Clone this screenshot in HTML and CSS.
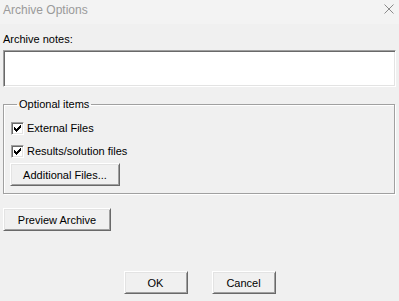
FILE: index.html
```html
<!DOCTYPE html>
<html lang="en">
<head>
  <meta charset="UTF-8" />
  <title>Archive Options</title>
  <link rel="stylesheet" href="styles.css">
</head>
<body>
  <div class="dialog">
    <div class="title-bar">
      <span class="title">Archive Options</span>
      <svg class="close-icon" width="10" height="10" viewBox="0 0 10 10">
        <path d="M0.5 0.5L9.5 9.5M9.5 0.5L0.5 9.5" stroke="#8a8a8a" stroke-width="1" fill="none"/>
      </svg>
    </div>
    <div class="content">
      <label class="notes-label" for="notes">Archive notes:</label>
      <textarea class="notes" id="notes"></textarea>

      <fieldset class="group">
        <legend>Optional items</legend>
        <div class="check-row">
          <span class="check">
            <svg width="9" height="9" viewBox="2 2 9 9" shape-rendering="crispEdges"><path d="M3 5h1v3H3zM4 6h1v3H4zM5 7h1v3H5zM6 6h1v3H6zM7 5h1v3H7zM8 4h1v3H8zM9 3h1v3H9z" fill="#000"/></svg>
          </span>
          <span class="check-label">External Files</span>
        </div>
        <div class="check-row">
          <span class="check">
            <svg width="9" height="9" viewBox="2 2 9 9" shape-rendering="crispEdges"><path d="M3 5h1v3H3zM4 6h1v3H4zM5 7h1v3H5zM6 6h1v3H6zM7 5h1v3H7zM8 4h1v3H8zM9 3h1v3H9z" fill="#000"/></svg>
          </span>
          <span class="check-label">Results/solution files</span>
        </div>
        <button type="button" class="btn additional-btn">Additional Files...</button>
      </fieldset>

      <button type="button" class="btn preview-btn">Preview Archive</button>

      <div class="footer">
        <button type="button" class="btn footer-btn">OK</button>
        <button type="button" class="btn footer-btn">Cancel</button>
      </div>
    </div>
  </div>
</body>
</html>
```

FILE: styles.css
```css
body {
  margin: 0;
  font-family: "Liberation Sans", Arial, sans-serif;
  font-size: 11px;
  color: #000;
  background-color: #f0f0f0;
}
.dialog {
  width: 399px;
  height: 301px;
  background-color: #f0f0f0;
}

/* Title bar */
.title-bar {
  height: 24px;
  background-color: #f3f3f3;
  display: flex;
  justify-content: space-between;
  align-items: flex-start;
  padding: 0 4px 0 3px;
}
.title {
  font-size: 12px;
  line-height: 20px;
  color: #9a9a9a;
}
.close-icon {
  margin-top: 4px;
  margin-right: 1px;
}

.content {
  padding: 0 3px;
}
.notes-label {
  display: block;
  margin-top: 9px;
  line-height: 13px;
}
.notes {
  display: block;
  box-sizing: border-box;
  width: 393px;
  height: 37px;
  margin: 4px 0 0;
  padding: 2px;
  resize: none;
  background-color: #fff;
  border: 1px solid;
  border-color: #a0a0a0 #fff #fff #a0a0a0;
  box-shadow: inset 1px 1px 0 #696969, inset -1px -1px 0 #e3e3e3;
  font: inherit;
  outline: none;
}

/* Group box */
.group {
  margin: 11px 1px 0 0;
  padding: 0 7px 7px;
  border: 1px solid #a0a0a0;
  box-shadow: 1px 1px 0 #fff, inset 1px 1px 0 #fff;
}
.group legend {
  margin-left: 6px;
  padding: 0 2px;
  line-height: 13px;
}
.check-row {
  display: flex;
  align-items: center;
  height: 13px;
  margin-top: 10px;
}
.check-row:first-of-type {
  margin-top: 11px;
}
.check {
  box-sizing: border-box;
  width: 13px;
  height: 13px;
  display: flex;
  align-items: center;
  justify-content: center;
  background-color: #fff;
  border: 1px solid;
  border-color: #a0a0a0 #fff #fff #a0a0a0;
  box-shadow: inset 1px 1px 0 #696969, inset -1px -1px 0 #e3e3e3;
}
.check-label {
  margin-left: 3px;
  line-height: 13px;
}

/* Buttons */
.btn {
  box-sizing: border-box;
  display: block;
  height: 23px;
  padding: 0;
  font: inherit;
  color: #000;
  background-color: #f0f0f0;
  border: 1px solid;
  border-color: #fff #696969 #696969 #fff;
  box-shadow: inset 1px 1px 0 #e3e3e3, inset -1px -1px 0 #a0a0a0;
  cursor: pointer;
}
.additional-btn {
  width: 110px;
  margin: 5px 0 0 -1px;
}
.preview-btn {
  width: 108px;
  margin-top: 14px;
}
.footer {
  display: flex;
  justify-content: center;
  gap: 24px;
  margin-top: 40px;
}
.footer-btn {
  width: 64px;
  height: 23px;
}
```
